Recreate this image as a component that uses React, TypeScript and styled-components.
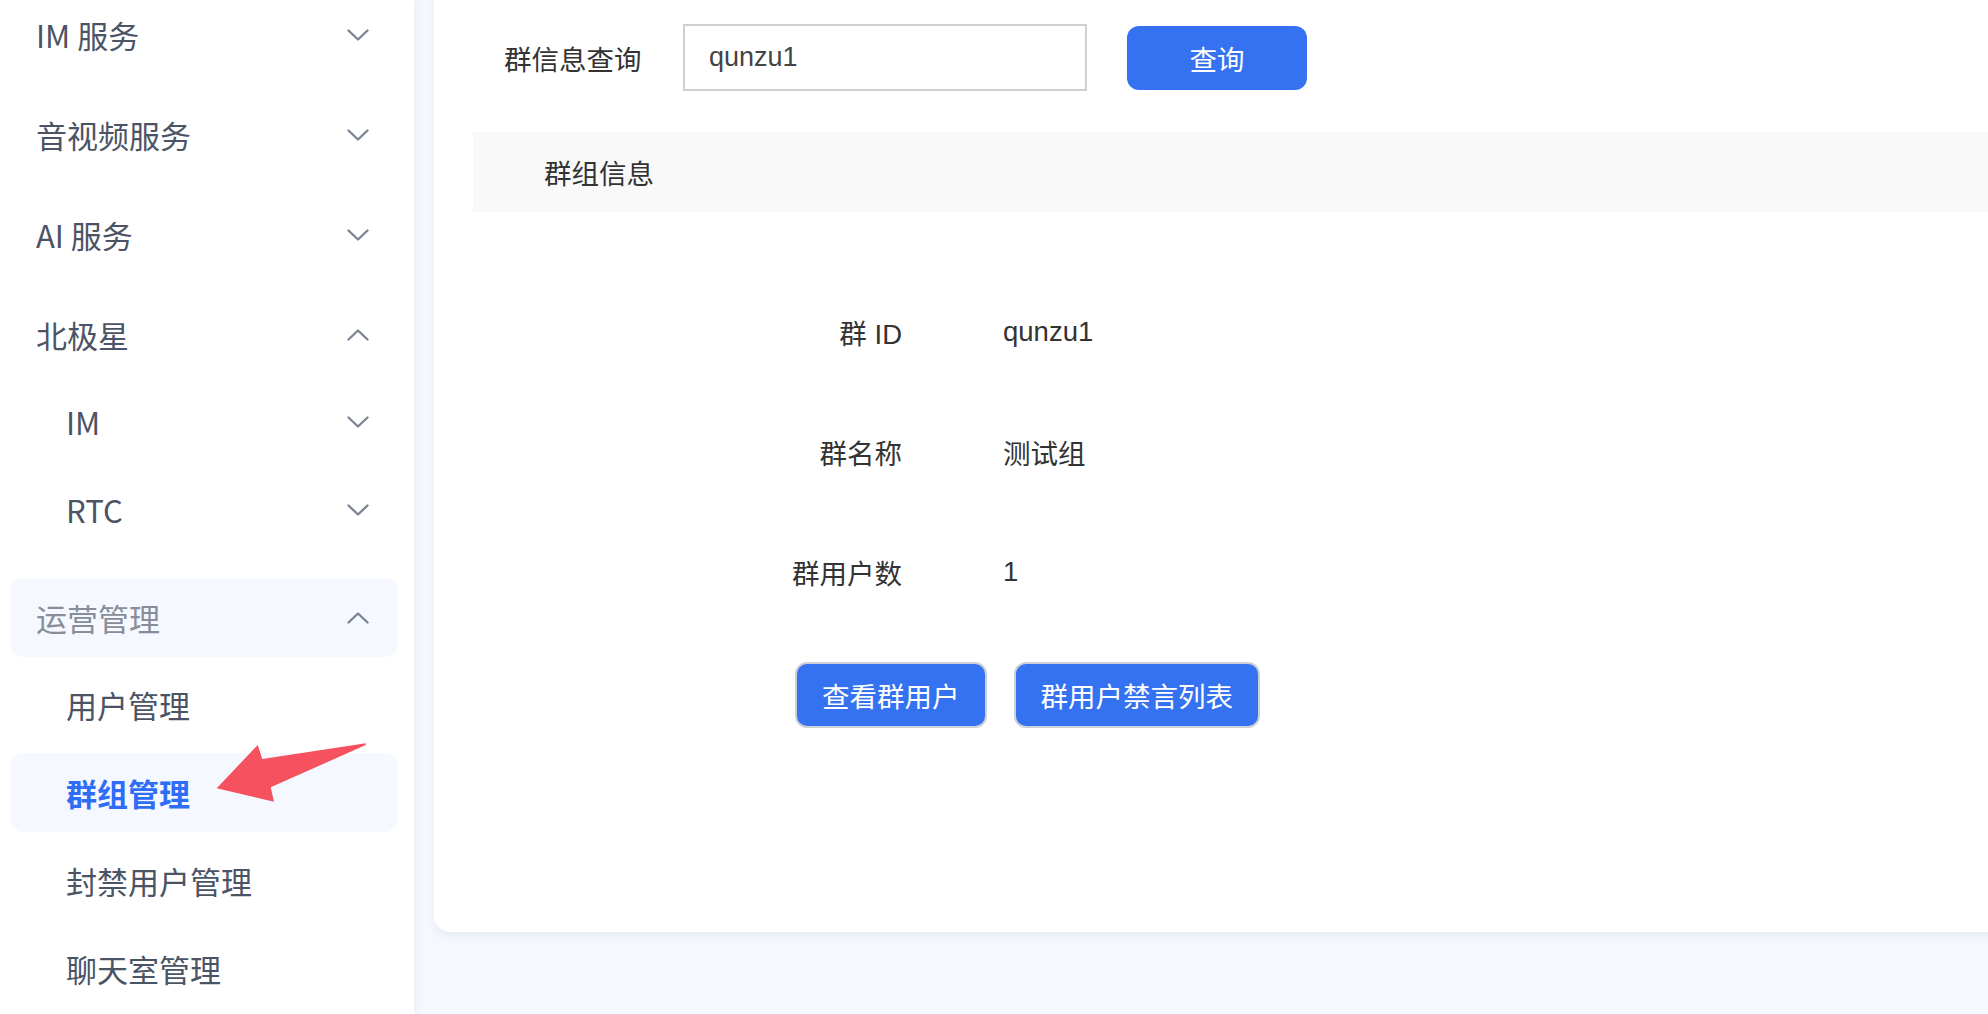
import { FC, Fragment } from "react";
import styled, { createGlobalStyle } from "styled-components";

const GlobalStyle = createGlobalStyle`
    html, body {
        margin: 0;
        padding: 0;
        height: 100%;
        overflow: hidden;
        background: #f5f8fe;
        font-family: "Liberation Sans", "Noto Sans CJK SC", sans-serif;
    }

    #root {
        height: 100%;
    }
`;

const Page = styled.div`
    position: relative;
    display: flex;
    height: 1014px;
    overflow: hidden;
`;

const Sidebar = styled.aside`
    position: relative;
    z-index: 2;
    width: 414px;
    flex-shrink: 0;
    background: #ffffff;
    box-shadow: 3px 0 8px rgba(40, 60, 120, 0.05);
    padding: 0 16px 0 10px;
    box-sizing: border-box;
`;

const MenuList = styled.div`
    display: flex;
    flex-direction: column;
    gap: 21px;
    margin-top: -5px;
`;

const MenuGroup = styled.div`
    display: flex;
    flex-direction: column;
`;

const SubList = styled.div`
    display: flex;
    flex-direction: column;
    gap: 9px;
    padding: 8px 0 8px;
`;

const MenuRow = styled.div<{ $level: number; $active?: boolean; $open?: boolean; $muted?: boolean }>`
    display: flex;
    align-items: center;
    justify-content: space-between;
    height: 79px;
    padding: 0 29px 0 ${({ $level }) => ($level === 0 ? 26 : 56)}px;
    border-radius: 14px;
    font-family: "Noto Sans CJK SC", "Liberation Sans", sans-serif;
    font-size: 31px;
    font-weight: ${({ $active }) => ($active ? 600 : 400)};
    color: ${({ $active, $muted }) => ($active ? "#2f6df6" : $muted ? "#878e99" : "#4b5465")};
    background: ${({ $active, $open }) => ($active || $open ? "#f5f8ff" : "transparent")};
`;

const Chevron: FC<{ up?: boolean }> = ({ up }) => (
    <svg width="22" height="12" viewBox="0 0 22 12">
        <polyline
            points={up ? "1.5,10.5 11,1.5 20.5,10.5" : "1.5,1.5 11,10.5 20.5,1.5"}
            fill="none"
            stroke="#7c8595"
            strokeWidth="2.4"
            strokeLinecap="round"
            strokeLinejoin="round"
        />
    </svg>
);

const Main = styled.main`
    flex: 1;
    min-width: 0;
    padding-left: 20px;
    overflow: hidden;
`;

const Card = styled.section`
    margin-top: -20px;
    margin-right: -30px;
    padding: 44px 0 204px;
    background: #ffffff;
    border-radius: 16px;
    box-shadow: 0 4px 10px rgba(30, 50, 100, 0.07);
    font-size: 27.5px;
    color: #333333;
`;

const SearchRow = styled.div`
    display: flex;
    align-items: center;
    padding-left: 70px;
`;

const SearchLabel = styled.span`
    width: 179px;
    flex-shrink: 0;
    font-family: "Noto Sans CJK SC", sans-serif;
    color: #333333;
`;

const SearchInput = styled.input`
    width: 404px;
    height: 67px;
    box-sizing: border-box;
    border: 2px solid #cfcfcf;
    padding: 0 0 0 24px;
    font-family: "Liberation Sans", "Noto Sans CJK SC", sans-serif;
    font-size: 27px;
    color: #444444;
    outline: none;
`;

const PrimaryButton = styled.button<{ $outlined?: boolean }>`
    height: ${({ $outlined }) => ($outlined ? 66 : 64)}px;
    box-sizing: border-box;
    padding: 0 25px;
    border: ${({ $outlined }) => ($outlined ? "2px solid #cdd0d6" : "none")};
    border-radius: 12px;
    background: #3572f1;
    color: #ffffff;
    font-family: "Noto Sans CJK SC", sans-serif;
    font-size: 27.5px;
    cursor: pointer;
`;

const SearchButton = styled(PrimaryButton)`
    width: 180px;
    margin-left: 40px;
`;

const SectionHeader = styled.div`
    margin: 41px 0 0 39px;
    height: 80px;
    display: flex;
    align-items: center;
    padding-left: 71px;
    background: #f9f9f9;
    font-family: "Noto Sans CJK SC", sans-serif;
    color: #333333;
`;

const DetailGrid = styled.dl`
    display: grid;
    grid-template-columns: 468px 1fr;
    grid-auto-rows: 60px;
    column-gap: 101px;
    row-gap: 60px;
    margin: 90px 0 0;
    font-family: "Liberation Sans", "Noto Sans CJK SC", sans-serif;
`;

const DetailLabel = styled.dt`
    display: flex;
    align-items: center;
    justify-content: flex-end;
    margin: 0;
`;

const DetailValue = styled.dd`
    display: flex;
    align-items: center;
    margin: 0;
`;

const ActionRow = styled.div`
    display: flex;
    gap: 27px;
    margin: 60px 0 0 361px;
`;

const Arrow = styled.svg`
    position: absolute;
    left: 210px;
    top: 735px;
    z-index: 5;
    pointer-events: none;
`;

const details: [string, string][] = [
    ["群 ID", "qunzu1"],
    ["群名称", "测试组"],
    ["群用户数", "1"],
];

const App: FC = () => {
    return (
        <>
            <GlobalStyle />
            <Page>
                <Sidebar>
                    <MenuList>
                        <MenuRow $level={0}>
                            <span>IM 服务</span>
                            <Chevron />
                        </MenuRow>
                        <MenuRow $level={0}>
                            <span>音视频服务</span>
                            <Chevron />
                        </MenuRow>
                        <MenuRow $level={0}>
                            <span>AI 服务</span>
                            <Chevron />
                        </MenuRow>
                        <MenuGroup>
                            <MenuRow $level={0}>
                                <span>北极星</span>
                                <Chevron up />
                            </MenuRow>
                            <SubList>
                                <MenuRow $level={1}>
                                    <span>IM</span>
                                    <Chevron />
                                </MenuRow>
                                <MenuRow $level={1}>
                                    <span>RTC</span>
                                    <Chevron />
                                </MenuRow>
                            </SubList>
                        </MenuGroup>
                        <MenuGroup>
                            <MenuRow $level={0} $open $muted>
                                <span>运营管理</span>
                                <Chevron up />
                            </MenuRow>
                            <SubList>
                                <MenuRow $level={1}>用户管理</MenuRow>
                                <MenuRow $level={1} $active>
                                    群组管理
                                </MenuRow>
                                <MenuRow $level={1}>封禁用户管理</MenuRow>
                                <MenuRow $level={1}>聊天室管理</MenuRow>
                            </SubList>
                        </MenuGroup>
                    </MenuList>
                </Sidebar>

                <Main>
                    <Card>
                        <SearchRow>
                            <SearchLabel>群信息查询</SearchLabel>
                            <SearchInput defaultValue="qunzu1" />
                            <SearchButton>查询</SearchButton>
                        </SearchRow>

                        <SectionHeader>群组信息</SectionHeader>

                        <DetailGrid>
                            {details.map(([label, value]) => (
                                <Fragment key={label}>
                                    <DetailLabel>{label}</DetailLabel>
                                    <DetailValue>{value}</DetailValue>
                                </Fragment>
                            ))}
                        </DetailGrid>

                        <ActionRow>
                            <PrimaryButton $outlined>查看群用户</PrimaryButton>
                            <PrimaryButton $outlined>群用户禁言列表</PrimaryButton>
                        </ActionRow>
                    </Card>
                </Main>

                <Arrow width="160" height="72" viewBox="0 0 160 72">
                    <polygon
                        points="6.7,53.3 47.7,10 52.3,24 155.7,8.3 155.7,10 60.7,52.3 64,66.7"
                        fill="#f5515f"
                    />
                </Arrow>
            </Page>
        </>
    );
};

export default App;
